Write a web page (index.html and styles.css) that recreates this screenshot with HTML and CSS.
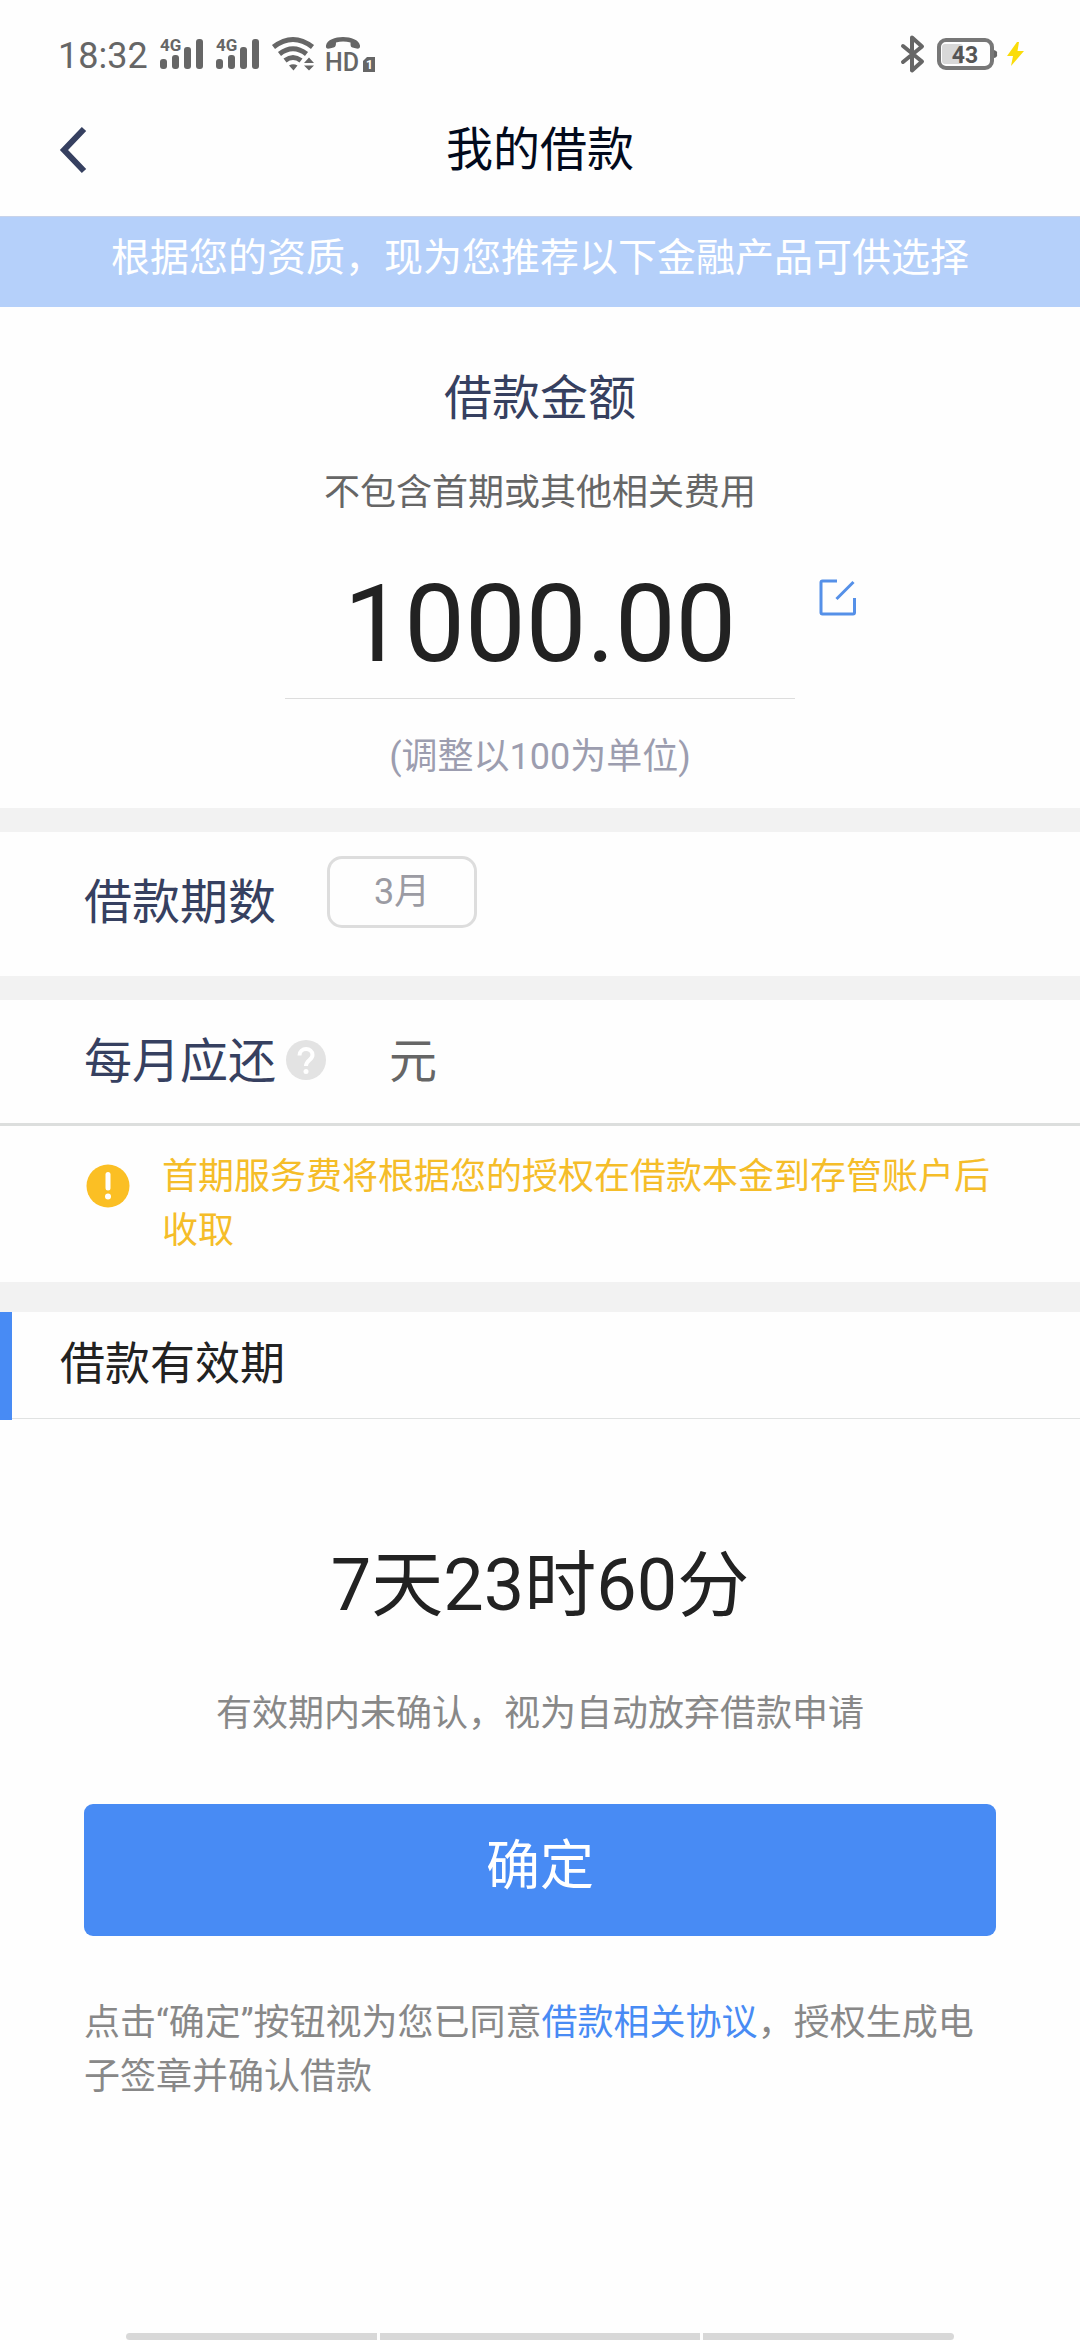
FILE: index.html
```html
<!DOCTYPE html>
<html lang="zh-CN">
<head>
    <meta charset="UTF-8">
    <meta name="viewport" content="width=device-width, initial-scale=1.0">
    <title>我的借款</title>
    <link rel="stylesheet" href="styles.css">
</head>
<body>
    <div class="status-bar">
        <span class="clock">18:32</span>
        <svg class="signal" width="44" height="36" viewBox="0 0 44 36">
            <text class="net-type" x="0" y="15">4G</text>
            <rect x="0" y="23" width="7" height="10" rx="3"/>
            <rect x="12" y="19" width="7" height="14" rx="3"/>
            <rect x="24" y="11" width="7" height="22" rx="3"/>
            <rect x="36" y="3" width="7" height="30" rx="3"/>
        </svg>
        <svg class="signal" width="44" height="36" viewBox="0 0 44 36">
            <text class="net-type" x="0" y="15">4G</text>
            <rect x="0" y="23" width="7" height="10" rx="3"/>
            <rect x="12" y="19" width="7" height="14" rx="3"/>
            <rect x="24" y="11" width="7" height="22" rx="3"/>
            <rect x="36" y="3" width="7" height="30" rx="3"/>
        </svg>
        <svg class="wifi" width="43" height="34" viewBox="0 0 43 34">
            <path class="arc" d="M1.5 10Q21 -5 40.500 10"/>
            <path class="arc" d="M7.500 17Q21 6.500 34.500 17"/>
            <path class="arc" d="M13 23.500Q21 17.500 29 23.500"/>
            <path d="M17 28.500Q21 26 25.500 28.500L21.500 33.500zM32 26l5-5.500L42 26zM32 28.500h10l-5 5z"/>
        </svg>
        <svg class="hd" width="50" height="37" viewBox="0 0 50 37">
            <path d="M0 9.500C2 -2 32 -2 34 9.500C34.500 12.500 32 13 30.500 12.500L26.500 11.500C24.500 11 24.500 9.500 24.500 6.500Q17 4.500 10 6.500C10 9.500 9.500 11 7.500 11.500L3.500 12.500C1.500 13 -.5 12.500 0 9.500z"/>
            <text class="hd-label" x="-1" y="35">HD</text>
            <path d="M41 21h8v15H37V25z"/>
            <text class="sim" x="40" y="33">1</text>
        </svg>
        <span class="spacer"></span>
        <svg class="bluetooth" width="24" height="38" viewBox="0 0 24 38">
            <path d="M2 11L21 26.500L11 35.500V2.500L21 11.500L2 27"/>
        </svg>
        <svg class="battery" width="61" height="32" viewBox="0 0 61 32">
            <rect class="charge" x="5" y="6" width="21" height="20" rx="3"/>
            <rect class="shell" x="2" y="2" width="53" height="28" rx="7"/>
            <path d="M57 12q4 1 3 4q1 3-3 4z"/>
            <text class="percent" x="28" y="25">43</text>
        </svg>
        <svg class="bolt" width="18" height="24" viewBox="0 0 18 24">
            <path d="M11 0L1 14h6L5 24L18 9h-6.500L13 0z"/>
        </svg>
    </div>

    <header class="header">
        <a href="#" class="back" aria-label="返回">
            <svg width="28" height="48" viewBox="0 0 28 48">
                <path d="M24 3L4 24L24 45"/>
            </svg>
        </a>
        <h1>我的借款</h1>
    </header>

    <p class="notice">根据您的资质，现为您推荐以下金融产品可供选择</p>

    <section class="amount">
        <label class="amount-title" for="amount">借款金额</label>
        <p class="amount-sub">不包含首期或其他相关费用</p>
        <div class="amount-row">
            <input id="amount" class="amount-input" type="text" inputmode="decimal" value="1000.00">
            <button type="button" class="edit-btn" aria-label="修改金额">
                <svg width="38" height="38" viewBox="0 0 38 38">
                    <path d="M18 2H3.500Q2 2 2 3.500V33.500Q2 35 3.500 35H34Q35.500 35 35.500 33.500V19M34.500 3L17.500 20"/>
                </svg>
            </button>
        </div>
        <p class="amount-hint">(调整以100为单位)</p>
    </section>

    <section class="row term">
        <h2>借款期数</h2>
        <button type="button" class="chip">3月</button>
    </section>

    <section class="row monthly">
        <h2>每月应还</h2>
        <button type="button" class="help-btn" aria-label="说明">
            <svg width="40" height="40" viewBox="0 0 40 40">
                <circle cx="20" cy="20" r="20"/>
                <path d="M13.500 15.500C13.500 7 26.500 7 26.500 15C26.500 20 20 20 20 26"/>
                <circle class="dot" cx="20" cy="31.500" r="2.500"/>
            </svg>
        </button>
        <span class="unit">元</span>
    </section>

    <section class="tip">
        <svg width="44" height="44" viewBox="0 0 44 44">
            <circle cx="22" cy="22" r="21.500"/>
            <path d="M22 10.500V24"/>
            <circle class="dot" cx="22" cy="32.500" r="3"/>
        </svg>
        <p>首期服务费将根据您的授权在借款本金到存管账户后收取</p>
    </section>

    <div class="section-head">
        <h2>借款有效期</h2>
    </div>

    <main class="confirm">
        <p class="countdown">7天23时60分</p>
        <p class="countdown-note">有效期内未确认，视为自动放弃借款申请</p>
        <button type="button" class="confirm-btn">确定</button>
        <p class="agreement">点击“确定”按钮视为您已同意<a href="#">借款相关协议</a>，授权生成电子签章并确认借款</p>
    </main>

    <div class="gesture-bar">
        <span></span>
        <span class="middle"></span>
        <span></span>
    </div>
</body>
</html>
```

FILE: styles.css
```css
* {
    box-sizing: border-box;
}
body {
    display: flex;
    flex-direction: column;
    min-height: 100vh;
    margin: 0;
    background: #fefefe;
    color: #222;
    font-family: Roboto, "Noto Sans CJK SC", sans-serif;
    font-size: 36px;
    line-height: 54px;
}
h1, h2, p {
    margin: 0;
    font-weight: 400;
}
button, input {
    padding: 0;
    border: none;
    background: none;
    color: inherit;
    font: inherit;
}
button {
    cursor: pointer;
}
a {
    color: #488bf4;
    text-decoration: none;
}
svg {
    display: block;
    flex: none;
    overflow: visible;
}

/* status bar */
.status-bar {
    display: flex;
    align-items: center;
    gap: 12px;
    padding: 24px 56px 0 58px;
    height: 84px;
    color: #666;
    fill: #666;
}
.clock {
    padding-top: 3px;
}
.spacer {
    flex: 1;
}
.net-type {
    font-size: 17px;
    font-weight: 700;
}
.arc {
    fill: none;
    stroke: #666;
    stroke-width: 5;
}
.hd-label {
    font-size: 25px;
    font-weight: 500;
}
.sim {
    fill: #fff;
    font-size: 12px;
    font-weight: 700;
}
.hd {
    margin-left: -1px;
}
.bluetooth {
    fill: none;
    stroke: #666;
    stroke-width: 4;
    stroke-linecap: round;
    stroke-linejoin: round;
}
.battery {
    margin-right: -4px;
}
.battery .shell {
    fill: none;
    stroke: #777;
    stroke-width: 4;
}
.battery .charge {
    fill: #d8d8d8;
}
.percent {
    font-size: 23px;
    font-weight: 700;
    text-anchor: middle;
    fill: #555;
}
.bolt {
    fill: #fadc0a;
}

/* title bar */
.header {
    display: grid;
    grid-template-columns: 1fr auto 1fr;
    align-items: center;
    height: 132px;
    padding: 0 60px;
}
.header h1 {
    color: #020a1c;
    font-size: 47px;
    line-height: 72px;
}
.back svg {
    fill: none;
    stroke: #364060;
    stroke-width: 6;
}
.notice {
    padding: 11px 24px 19px;
    border-top: 1px solid #c8d3ea;
    background: #b5d0fa;
    color: #fff;
    font-size: 39px;
    line-height: 60px;
    text-align: center;
}

/* amount */
.amount {
    padding: 56px 0 24px;
    border-bottom: 24px solid #f2f2f2;
    text-align: center;
}
.amount-title {
    display: block;
    color: #364060;
    font-size: 48px;
    line-height: 72px;
}
.amount-sub {
    margin: 31px 0 30px;
    color: #666;
}
.amount-row {
    display: grid;
    grid-template-columns: 1fr 510px 1fr;
}
.amount-input {
    grid-column: 2;
    width: 100%;
    height: 149px;
    border-bottom: 1px solid #ddd;
    font-size: 108px;
    text-align: center;
}
.edit-btn {
    justify-self: start;
    align-self: start;
    padding: 29px 0 0 24px;
}
.edit-btn svg {
    fill: none;
    stroke: #5590e8;
    stroke-width: 3;
}
.amount-hint {
    margin-top: 31px;
    color: #9c9daf;
}

/* term and monthly rows */
.row {
    display: flex;
    align-items: center;
    padding: 0 84px;
}
.row h2 {
    color: #364060;
    font-size: 48px;
    line-height: 72px;
}
.term {
    gap: 51px;
    height: 168px;
    padding-top: 24px;
    padding-bottom: 26px;
    border-bottom: 24px solid #f2f2f2;
}
.chip {
    align-self: flex-start;
    width: 150px;
    height: 72px;
    border: 3px solid #ddd;
    border-radius: 15px;
    color: #9b9ba3;
}
.monthly {
    height: 126px;
    border-bottom: 3px solid #dcdedd;
}
.help-btn {
    margin: 0 63px 3px 10px;
    fill: #e3e3e3;
}
.help-btn path {
    fill: none;
    stroke: #fff;
    stroke-width: 4;
}
.dot {
    fill: #fff;
}
.unit {
    color: #666;
    font-size: 48px;
}

/* service fee tip */
.tip {
    display: flex;
    align-items: flex-start;
    gap: 32px;
    padding: 24px 84px 24px 86px;
    border-bottom: 30px solid #f2f2f2;
    color: #f5bd29;
}
.tip svg {
    margin-top: 14px;
    fill: #fbbf24;
}
.tip path {
    stroke: #fff;
    stroke-width: 5;
    stroke-linecap: round;
}

/* validity */
.section-head {
    border-left: 12px solid #488bf4;
    padding-bottom: 1px;
}
.section-head h2 {
    padding-left: 48px;
    border-bottom: 1px solid #e0e2e2;
    font-size: 45px;
    line-height: 106px;
}
.confirm {
    padding: 112px 84px 48px;
    text-align: center;
}
.countdown {
    font-size: 72px;
    line-height: 108px;
}
.countdown-note {
    margin: 47px 0 63px;
    color: #888;
}
.confirm-btn {
    width: 100%;
    height: 132px;
    padding-bottom: 6px;
    border-radius: 9px;
    background: #488bf4;
    color: #fff;
    font-size: 54px;
}
.agreement {
    margin-top: 60px;
    color: #888;
    text-align: left;
}

/* gesture bar */
.gesture-bar {
    display: flex;
    gap: 3px;
    height: 7px;
    margin: auto 126px 0;
}
.gesture-bar span {
    flex: 251;
    background: #d8d8d8;
}
.gesture-bar .middle {
    flex: 320;
}
.gesture-bar span:first-child {
    border-radius: 4px 0 0 4px;
}
.gesture-bar span:last-child {
    border-radius: 0 4px 4px 0;
}
```
